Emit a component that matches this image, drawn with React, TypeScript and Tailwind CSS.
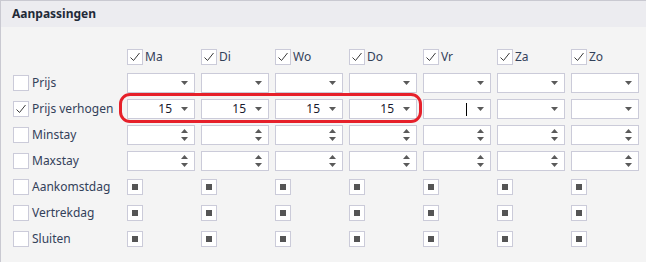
import React from "react";

const days = ["Ma", "Di", "Wo", "Do", "Vr", "Za", "Zo"];

function Check({ checked }: { checked?: boolean }) {
  return (
    <div className="w-[16px] h-[16px] bg-white border border-[#cbcbd9] shrink-0 flex items-center justify-center">
      {checked && (
        <svg width="14" height="14" viewBox="0 0 14 14">
          <path d="M2.5 7.5 L5.5 10.5 L11.5 3" fill="none" stroke="#3a3a3a" strokeWidth="1" />
        </svg>
      )}
    </div>
  );
}

function DownArrow() {
  return (
    <svg width="7" height="4" viewBox="0 0 7 4" className="block">
      <path d="M0 0 L7 0 L3.5 4 Z" fill="#5a5a5a" />
    </svg>
  );
}

function UpArrow() {
  return (
    <svg width="7" height="4" viewBox="0 0 7 4" className="block">
      <path d="M0 4 L7 4 L3.5 0 Z" fill="#5a5a5a" />
    </svg>
  );
}

function Combo({ value, cursor }: { value?: string; cursor?: boolean }) {
  return (
    <div className="h-[20px] w-[68px] bg-white border border-[#cbcbd9] flex items-center">
      <div className="flex-1 flex justify-end items-center pr-[2px] text-[12px] text-[#1a1a2e] leading-none">
        {value}
        {cursor && <div className="w-px h-[13px] bg-black mr-[1px]" />}
      </div>
      <div className="w-[20px] flex justify-center">
        <DownArrow />
      </div>
    </div>
  );
}

function Spin() {
  return (
    <div className="h-[20px] w-[68px] bg-white border border-[#cbcbd9] flex items-center justify-end">
      <div className="w-[20px] flex flex-col items-center gap-[4px]">
        <UpArrow />
        <DownArrow />
      </div>
    </div>
  );
}

function SmallBox() {
  return (
    <div className="w-[16px] h-[16px] bg-white border border-[#cbcbd9] flex items-center justify-center">
      <div className="w-[6px] h-[6px] bg-[#555]" />
    </div>
  );
}

function RowLabel({ label, checked }: { label: string; checked?: boolean }) {
  return (
    <div className="flex items-center gap-[3px] h-[20px]">
      <Check checked={checked} />
      <span className="text-[12px] text-[#33415a] leading-none">{label}</span>
    </div>
  );
}

export default function App() {
  const rows: { label: string; checked?: boolean; kind: "combo" | "combo15" | "spin" | "box" }[] = [
    { label: "Prijs", kind: "combo" },
    { label: "Prijs verhogen", checked: true, kind: "combo15" },
    { label: "Minstay", kind: "spin" },
    { label: "Maxstay", kind: "spin" },
    { label: "Aankomstdag", kind: "box" },
    { label: "Vertrekdag", kind: "box" },
    { label: "Sluiten", kind: "box" },
  ];
  return (
    <div
      className="relative w-[646px] h-[262px] bg-[#f4f4f4] border-l border-t border-[#c9c9d1] overflow-hidden"
      style={{ fontFamily: '"Noto Sans", "Open Sans", sans-serif' }}
    >
      <div className="h-[26px] bg-[#ececf0] flex items-center pl-[11px]">
        <span className="text-[12px] font-bold text-[#1f2a38]">Aanpassingen</span>
      </div>
      <div className="pl-[12px] pt-[22px] grid grid-cols-[108px_repeat(7,68px)] gap-x-[6px] gap-y-[6px] grid-rows-[18px_repeat(7,20px)]">
        <div />
        {days.map((d) => (
          <div key={d} className="flex items-start gap-[2px]">
            <Check checked />
            <span className="text-[12px] text-[#33415a] leading-[16px]">{d}</span>
          </div>
        ))}
        {rows.map((r) => (
          <React.Fragment key={r.label}>
            <RowLabel label={r.label} checked={r.checked} />
            {days.map((d, i) => (
              <div key={d} className="flex items-center h-[20px]">
                {r.kind === "combo" && <Combo />}
                {r.kind === "combo15" && (i < 4 ? <Combo value="15" /> : i === 4 ? <Combo cursor /> : <Combo />)}
                {r.kind === "spin" && <Spin />}
                {r.kind === "box" && <SmallBox />}
              </div>
            ))}
          </React.Fragment>
        ))}
      </div>
      <div className="absolute left-[118px] top-[92px] w-[303px] h-[30px] border-[3px] border-[#e6202a] rounded-[11px]" />
    </div>
  );
}
